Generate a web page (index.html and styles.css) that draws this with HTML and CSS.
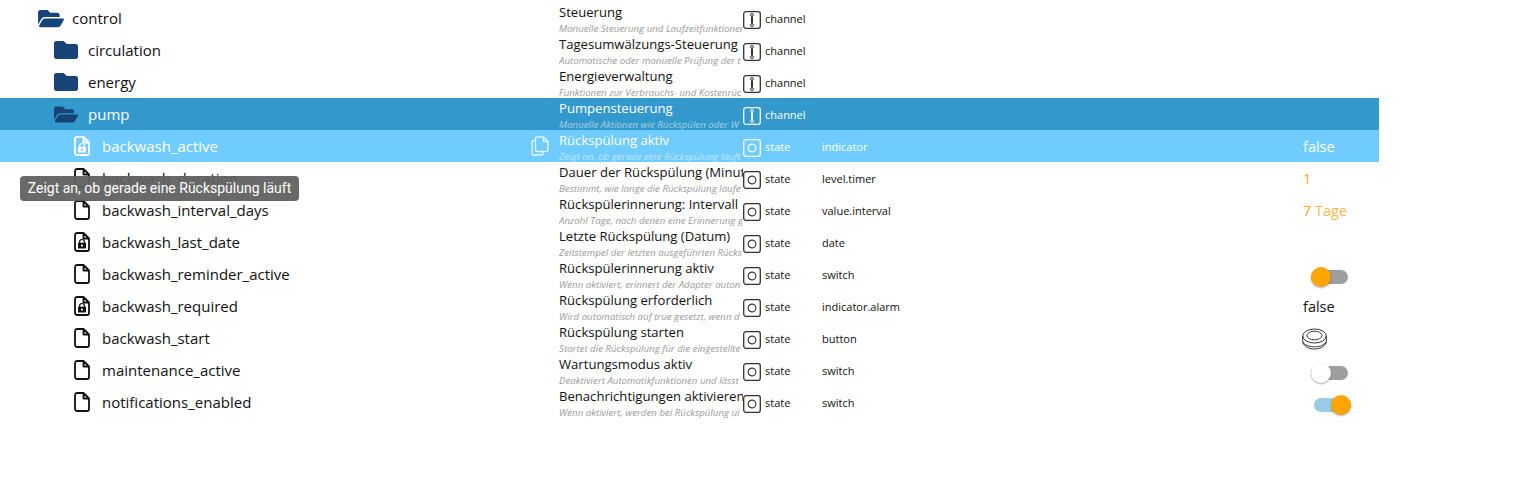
FILE: index.html
```html
<!DOCTYPE html>
<html lang="de">
<head>
    <meta charset="UTF-8">
    <title>Objekte</title>
    <link rel="stylesheet" href="styles.css">
</head>
<body>
    <svg class="defs" width="0" height="0">
        <symbol id="i-folder" viewBox="0 0 512 512"><path d="M464 128H272l-64-64H48C21.49 64 0 85.49 0 112v288c0 26.51 21.49 48 48 48h416c26.51 0 48-21.49 48-48V176c0-26.51-21.49-48-48-48z"/></symbol>
        <symbol id="i-open" viewBox="0 0 576 512"><path d="M572.694 292.093L500.27 416.248A63.997 63.997 0 0 1 444.989 448H45.025c-18.523 0-30.064-20.093-20.731-36.093l72.424-124.155A64 64 0 0 1 152 256h399.964c18.523 0 30.064 20.093 20.73 36.093zM152 224h328v-48c0-26.51-21.49-48-48-48H272l-64-64H48C21.49 64 0 85.49 0 112v278.046l69.077-118.418C86.214 242.25 117.989 224 152 224z"/></symbol>
        <symbol id="i-file" viewBox="0 0 16 20"><path d="M3 1h6.500L15 6.500V17a2 2 0 0 1-2 2H3a2 2 0 0 1-2-2V3a2 2 0 0 1 2-2zM9.500 1v5.500H15" fill="none" stroke="currentColor" stroke-width="1.800" stroke-linejoin="round"/></symbol>
        <symbol id="i-lock" viewBox="0 0 16 20"><path d="M3 1h6.500L15 6.500V17a2 2 0 0 1-2 2H3a2 2 0 0 1-2-2V3a2 2 0 0 1 2-2zM9.500 1v5.500H15" fill="none" stroke="currentColor" stroke-width="1.800" stroke-linejoin="round"/><path d="M5.600 11V9.900a2.400 2.400 0 0 1 4.800 0V11" fill="none" stroke="currentColor" stroke-width="1.200"/><path d="M4 10.800h8v5.700H4zM8 12.500a1.100 1.100 0 1 0 0 2.200 1.100 1.100 0 0 0 0-2.200z" fill="currentColor" fill-rule="evenodd"/></symbol>
        <symbol id="i-channel" viewBox="0 0 18 18"><rect x=".7" y=".7" width="16.600" height="16.600" rx="2.200" fill="none" stroke="currentColor" stroke-width="1.300"/><path d="M9 5.500v7" stroke="currentColor" stroke-width="2"/><circle cx="9" cy="3.900" r="1.400" fill="none" stroke="currentColor"/><circle cx="9" cy="14.100" r="1.400" fill="none" stroke="currentColor"/></symbol>
        <symbol id="i-state" viewBox="0 0 18 18"><rect x=".7" y=".7" width="16.600" height="16.600" rx="2.200" fill="none" stroke="currentColor" stroke-width="1.300"/><circle cx="9" cy="9" r="3.900" fill="none" stroke="currentColor" stroke-width="1.100"/></symbol>
        <symbol id="i-copy" viewBox="0 0 18 20"><path d="M6 1h6.500L17 5.500V14a1.500 1.500 0 0 1-1.500 1.500h-9.500A1.500 1.500 0 0 1 4.500 14V2.500A1.500 1.500 0 0 1 6 1zM12.500 1v4.500H17M4.500 4.500H2.500A1.500 1.500 0 0 0 1 6v11.500A1.500 1.500 0 0 0 2.500 19h8A1.500 1.500 0 0 0 12 17.500v-2" fill="none" stroke="currentColor" stroke-width="1.400" stroke-linejoin="round"/></symbol>
        <symbol id="i-button" viewBox="0 0 25 22"><ellipse cx="12.500" cy="8" rx="11.800" ry="7" fill="none" stroke="currentColor" stroke-width=".9"/><ellipse cx="12.500" cy="7.500" rx="7.500" ry="4.300" fill="none" stroke="currentColor" stroke-width=".9"/><path d="M.7 8v5c0 4.500 5.300 8 11.800 8s11.800-3.500 11.800-8V8M1 14c1.500 3 6 4.800 11.500 4.800S22.500 17 24 14" fill="none" stroke="currentColor" stroke-width=".9"/></symbol>
    </svg>

    <div class="tree">
        <div class="row">
            <div class="name lvl-0"><svg class="ico-open"><use href="#i-open"/></svg><span>control</span></div>
            <div class="title"><div class="t">Steuerung</div><div class="d">Manuelle Steuerung und Laufzeitfunktionen</div></div>
            <div class="type"><svg class="ico-type"><use href="#i-channel"/></svg>channel</div>
        </div>
        <div class="row">
            <div class="name lvl-1"><svg class="ico-folder"><use href="#i-folder"/></svg><span>circulation</span></div>
            <div class="title"><div class="t">Tagesumwälzungs-Steuerung</div><div class="d">Automatische oder manuelle Prüfung der t</div></div>
            <div class="type"><svg class="ico-type"><use href="#i-channel"/></svg>channel</div>
        </div>
        <div class="row">
            <div class="name lvl-1"><svg class="ico-folder"><use href="#i-folder"/></svg><span>energy</span></div>
            <div class="title"><div class="t">Energieverwaltung</div><div class="d">Funktionen zur Verbrauchs- und Kostenrüc</div></div>
            <div class="type"><svg class="ico-type"><use href="#i-channel"/></svg>channel</div>
        </div>
        <div class="row row-selected">
            <div class="name lvl-1"><svg class="ico-open ico-open-small"><use href="#i-open"/></svg><span>pump</span></div>
            <div class="title"><div class="t">Pumpensteuerung</div><div class="d">Manuelle Aktionen wie Rückspülen oder W</div></div>
            <div class="type"><svg class="ico-type"><use href="#i-channel"/></svg>channel</div>
        </div>
        <div class="row row-hover">
            <div class="name lvl-2"><svg class="ico-file"><use href="#i-lock"/></svg><span>backwash_active</span><svg class="ico-copy"><use href="#i-copy"/></svg></div>
            <div class="title"><div class="t">Rückspülung aktiv</div><div class="d">Zeigt an, ob gerade eine Rückspülung läuft</div></div>
            <div class="type"><svg class="ico-type"><use href="#i-state"/></svg>state</div>
            <div class="role">indicator</div>
            <div class="value">false</div>
        </div>
        <div class="row">
            <div class="name lvl-2"><svg class="ico-file"><use href="#i-file"/></svg><span>backwash_duration</span></div>
            <div class="title"><div class="t">Dauer der Rückspülung (Minuten)</div><div class="d">Bestimmt, wie lange die Rückspülung laufe</div></div>
            <div class="type"><svg class="ico-type"><use href="#i-state"/></svg>state</div>
            <div class="role">level.timer</div>
            <div class="value val-orange">1</div>
        </div>
        <div class="row">
            <div class="name lvl-2"><svg class="ico-file"><use href="#i-file"/></svg><span>backwash_interval_days</span></div>
            <div class="title"><div class="t">Rückspülerinnerung: Intervall</div><div class="d">Anzahl Tage, nach denen eine Erinnerung g</div></div>
            <div class="type"><svg class="ico-type"><use href="#i-state"/></svg>state</div>
            <div class="role">value.interval</div>
            <div class="value val-orange">7 <span class="unit">Tage</span></div>
        </div>
        <div class="row">
            <div class="name lvl-2"><svg class="ico-file"><use href="#i-lock"/></svg><span>backwash_last_date</span></div>
            <div class="title"><div class="t">Letzte Rückspülung (Datum)</div><div class="d">Zeitstempel der letzten ausgeführten Rücks</div></div>
            <div class="type"><svg class="ico-type"><use href="#i-state"/></svg>state</div>
            <div class="role">date</div>
            <div class="value"></div>
        </div>
        <div class="row">
            <div class="name lvl-2"><svg class="ico-file"><use href="#i-file"/></svg><span>backwash_reminder_active</span></div>
            <div class="title"><div class="t">Rückspülerinnerung aktiv</div><div class="d">Wenn aktiviert, erinnert der Adapter auton</div></div>
            <div class="type"><svg class="ico-type"><use href="#i-state"/></svg>state</div>
            <div class="role">switch</div>
            <div class="value"><div class="switch sw-on-left"><i></i></div></div>
        </div>
        <div class="row">
            <div class="name lvl-2"><svg class="ico-file"><use href="#i-lock"/></svg><span>backwash_required</span></div>
            <div class="title"><div class="t">Rückspülung erforderlich</div><div class="d">Wird automatisch auf true gesetzt, wenn d</div></div>
            <div class="type"><svg class="ico-type"><use href="#i-state"/></svg>state</div>
            <div class="role">indicator.alarm</div>
            <div class="value">false</div>
        </div>
        <div class="row">
            <div class="name lvl-2"><svg class="ico-file"><use href="#i-file"/></svg><span>backwash_start</span></div>
            <div class="title"><div class="t">Rückspülung starten</div><div class="d">Startet die Rückspülung für die eingestellte</div></div>
            <div class="type"><svg class="ico-type"><use href="#i-state"/></svg>state</div>
            <div class="role">button</div>
            <div class="value"><svg class="ico-button"><use href="#i-button"/></svg></div>
        </div>
        <div class="row">
            <div class="name lvl-2"><svg class="ico-file"><use href="#i-file"/></svg><span>maintenance_active</span></div>
            <div class="title"><div class="t">Wartungsmodus aktiv</div><div class="d">Deaktiviert Automatikfunktionen und lässt</div></div>
            <div class="type"><svg class="ico-type"><use href="#i-state"/></svg>state</div>
            <div class="role">switch</div>
            <div class="value"><div class="switch sw-off"><i></i></div></div>
        </div>
        <div class="row">
            <div class="name lvl-2"><svg class="ico-file"><use href="#i-file"/></svg><span>notifications_enabled</span></div>
            <div class="title"><div class="t">Benachrichtigungen aktivieren</div><div class="d">Wenn aktiviert, werden bei Rückspülung ui</div></div>
            <div class="type"><svg class="ico-type"><use href="#i-state"/></svg>state</div>
            <div class="role">switch</div>
            <div class="value"><div class="switch sw-on"><i></i></div></div>
        </div>
    </div>

    <div class="tooltip">Zeigt an, ob gerade eine Rückspülung läuft</div>
</body>
</html>
```

FILE: styles.css
```css
html, body { margin: 0; padding: 0; background-color: #fff; }
body { font-family: 'Open Sans', 'Noto Sans', sans-serif; color: #111; height: 481px; overflow: hidden; position: relative; }
.defs { position: absolute; }
.tree { width: 1379px; padding-top: 2px; }
.row { display: flex; align-items: center; height: 32px; overflow: hidden; }
.row-selected { background-color: #3399cc; color: #fff; }
.row-hover { background-color: #70ccff; color: #fff; }

.name { width: 559px; flex: none; display: flex; align-items: center; font-size: 15px; position: relative; box-sizing: border-box; }
.lvl-0 { padding-left: 38px; }
.lvl-1 { padding-left: 54px; }
.lvl-2 { padding-left: 74px; }
.ico-open { width: 26px; height: 23px; fill: #164477; margin-right: 8px; }
.ico-open-small { width: 24px; margin-right: 10px; }
.ico-folder { width: 24px; height: 24px; fill: #164477; margin-right: 10px; }
.ico-file { width: 16px; height: 20px; margin-right: 12px; color: #111; }
.row-hover .ico-file { color: #fff; }
.ico-copy { width: 18px; height: 20px; position: absolute; left: 531px; top: 50%; margin-top: -10px; color: #fff; opacity: .8; }

.title { width: 184px; flex: none; overflow: hidden; white-space: nowrap; height: 32px; }
.t { font-size: 13.1px; line-height: 16px; margin-top: 2px; }
.d { font-size: 9.7px; line-height: 12px; margin-top: 3px; font-style: italic; color: #9a9a9a; }
.row-selected .d, .row-hover .d { color: rgba(255, 255, 255, .55); }

.type { width: 79px; flex: none; display: flex; align-items: center; font-size: 11px; }
.ico-type { width: 18px; height: 18px; margin-right: 4px; margin-top: 4px; color: #333; }
.row-selected .ico-type, .row-hover .ico-type { color: #fff; }
.role { width: 481px; flex: none; font-size: 11px; }
.value { font-size: 14.5px; }
.val-orange { color: #ffa726; }
.unit { color: #ffb74d; }
.ico-button { width: 25px; height: 22px; display: block; margin: 1px 0 0 -1px; color: #222; }

.switch { position: relative; width: 37px; height: 14px; border-radius: 7px; background-color: #9e9e9e; margin-top: 6px; }
.switch i { position: absolute; top: -3px; width: 20px; height: 20px; border-radius: 50%; box-shadow: 0 1px 2px rgba(0, 0, 0, .35); }
.sw-on-left { margin-left: 8px; }
.sw-on-left i { left: 0; background-color: #ffa500; }
.sw-off { margin-left: 8px; }
.sw-off i { left: 0; background-color: #fff; }
.sw-on { margin-left: 11px; background-color: #99cce6; }
.sw-on i { right: 0; background-color: #ffa500; }

.tooltip { position: absolute; left: 20px; top: 176px; width: 279px; height: 25px; line-height: 25px; text-align: center; border-radius: 4px; background-color: rgba(97, 97, 97, .95); color: #fff; font-family: Roboto, sans-serif; font-size: 14px; }
```
